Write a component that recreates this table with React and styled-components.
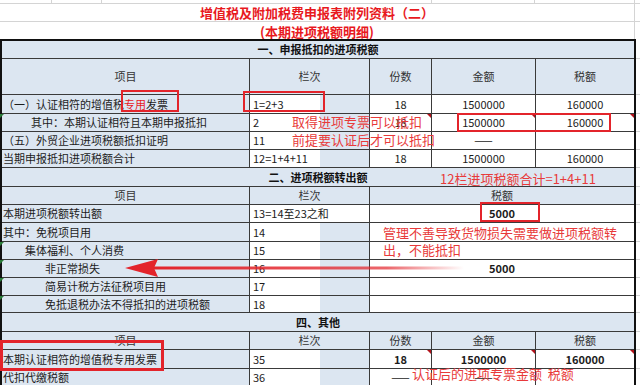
import styled, { createGlobalStyle } from "styled-components";

const GlobalStyle = createGlobalStyle`
  html, body { margin: 0; padding: 0; background: #fff; }
  body { font-family: "Noto Sans CJK SC", "Noto Sans", sans-serif; }
`;

const BLUE = "#dce6f1";
const LINE = "#3a3a3a";
const GRID = "#d4d4d4";
const ROW_H = [18, 36, 19, 18, 18, 18, 19, 18, 18, 19, 18, 18, 18, 17, 19, 18, 19, 18];

const Page = styled.div`
  position: relative;
  width: 640px;
  height: 385px;
  overflow: hidden;
  background: #fff;
`;

const TopStrip = styled.div`
  height: 4px;
  box-sizing: border-box;
  display: grid;
  grid-template-columns: 52px 50px 330px 103px 100px 5px;
  border-bottom: 1px solid ${GRID};
  & > div { border-right: 1px solid ${GRID}; }
  & > div:last-child { border-right: none; }
`;

const SheetRow = styled.div`
  height: ${(p) => p.$h}px;
  box-sizing: border-box;
  display: grid;
  grid-template-columns: 635px 5px;
  border-bottom: ${(p) => (p.$line ? `1px solid ${GRID}` : "none")};
`;

const TitleCell = styled.div`
  display: flex;
  align-items: center;
  justify-content: center;
  border-right: 1px solid ${GRID};
  color: #e8191e;
  font-weight: 700;
  font-size: 13px;
  line-height: 1;
  padding-top: ${(p) => p.$pt || 0}px;
`;

const Sheet = styled.div`
  display: flex;
  align-items: flex-start;
`;

const Table = styled.div`
  width: 636px;
  box-sizing: border-box;
  border: 2px solid #111;
  border-bottom: none;
`;

const Gutter = styled.div`
  flex: 1;
  display: flex;
  flex-direction: column;
`;

const GutterCell = styled.div`
  height: ${(p) => p.$h}px;
  box-sizing: border-box;
  border-bottom: 1px solid ${GRID};
`;

const Row = styled.div`
  height: ${(p) => p.$h}px;
  display: grid;
  grid-template-columns: 248px 120px 62px 104px 98px;
`;

const Cell = styled.div`
  grid-column: span ${(p) => p.$span || 1};
  position: relative;
  box-sizing: border-box;
  display: flex;
  align-items: center;
  justify-content: center;
  border-right: 1px solid ${LINE};
  border-bottom: 1px solid ${LINE};
  background: #fff;
  font-size: 11px;
  line-height: 1;
  color: #1c1c1c;
  white-space: nowrap;
  &:last-child { border-right: none; }
`;

const Section = styled(Cell)`
  background: ${BLUE};
  font-weight: 700;
  color: #111;
`;

const Head = styled(Cell)`
  background: ${BLUE};
  color: #333;
`;

const Item = styled(Cell)`
  justify-content: flex-start;
  padding-left: ${(p) => p.$indent || 1}px;
  background: ${BLUE};
  &::before {
    content: "";
    display: ${(p) => (p.$flag ? "block" : "none")};
    position: absolute;
    left: -2px;
    top: 0;
    border-top: 4px solid #2a7d3a;
    border-right: 4px solid transparent;
  }
`;

const Code = styled(Cell)`
  justify-content: flex-start;
  padding-left: 3px;
  background: ${(p) => (p.$plain ? "#fff" : `linear-gradient(to right, #fff 70px, ${BLUE} 70px)`)};
`;

const Num = styled(Cell)`
  font-weight: ${(p) => (p.$bold ? 700 : 400)};
  &::after {
    content: "";
    display: ${(p) => (p.$note ? "block" : "none")};
    position: absolute;
    right: 0;
    top: 0;
    border-top: 4px solid #b3121a;
    border-left: 4px solid transparent;
  }
`;

const RedText = styled.span`
  color: #e8191e;
`;

const Note = styled.div`
  position: absolute;
  left: ${(p) => p.$x}px;
  top: ${(p) => p.$y}px;
  width: ${(p) => (p.$w ? `${p.$w}px` : "auto")};
  color: #e83a3a;
  font-size: 13px;
  line-height: 17px;
  white-space: ${(p) => (p.$w ? "normal" : "nowrap")};
`;

const Box = styled.div`
  position: absolute;
  left: ${(p) => p.$x}px;
  top: ${(p) => p.$y}px;
  width: ${(p) => p.$w}px;
  height: ${(p) => p.$h}px;
  box-sizing: border-box;
  border: ${(p) => p.$b || 2}px solid #e3242b;
`;

const Arrow = styled.svg`
  position: absolute;
  left: 120px;
  top: 254px;
`;

export default function App() {
  return (
    <>
      <GlobalStyle />
      <Page>
        <TopStrip>
          <div /><div /><div /><div /><div /><div />
        </TopStrip>
        <SheetRow $h={18} $line>
          <TitleCell>增值税及附加税费申报表附列资料（二）</TitleCell>
          <div />
        </SheetRow>
        <SheetRow $h={17}>
          <TitleCell $pt={2}>(本期进项税额明细)</TitleCell>
          <div />
        </SheetRow>

        <Sheet>
          <Table>
            <Row $h={18}><Section $span={5}>一、申报抵扣的进项税额</Section></Row>
            <Row $h={36}>
              <Head>项目</Head><Head>栏次</Head><Head>份数</Head><Head>金额</Head><Head>税额</Head>
            </Row>
            <Row $h={19}>
              <Item>（一）认证相符的增值税<RedText>专用</RedText>发票</Item>
              <Code>1=2+3</Code>
              <Num>18</Num><Num>1500000</Num><Num>160000</Num>
            </Row>
            <Row $h={18}>
              <Item $indent={29} $flag>其中：本期认证相符且本期申报抵扣</Item>
              <Code>2</Code>
              <Num $note>18</Num><Num $note>1500000</Num><Num $note>160000</Num>
            </Row>
            <Row $h={18}>
              <Item>（五）外贸企业进项税额抵扣证明</Item>
              <Code>11</Code>
              <Num /><Num>——</Num><Num />
            </Row>
            <Row $h={18}>
              <Item>当期申报抵扣进项税额合计</Item>
              <Code>12=1+4+11</Code>
              <Num>18</Num><Num>1500000</Num><Num>160000</Num>
            </Row>

            <Row $h={19}><Section $span={5}>二、进项税额转出额</Section></Row>
            <Row $h={18}>
              <Head>项目</Head><Head>栏次</Head><Head $span={3}>税额</Head>
            </Row>
            <Row $h={18}>
              <Item>本期进项税额转出额</Item>
              <Code $plain>13=14至23之和</Code>
              <Num $span={3} $bold>5000</Num>
            </Row>
            <Row $h={19}>
              <Item>其中：免税项目用</Item>
              <Code>14</Code>
              <Num $span={3} />
            </Row>
            <Row $h={18}>
              <Item $indent={23} $flag>集体福利、个人消费</Item>
              <Code>15</Code>
              <Num $span={3} />
            </Row>
            <Row $h={18}>
              <Item $indent={43} $flag>非正常损失</Item>
              <Code>16</Code>
              <Num $span={3} $bold>5000</Num>
            </Row>
            <Row $h={18}>
              <Item $indent={43} $flag>简易计税方法征税项目用</Item>
              <Code>17</Code>
              <Num $span={3} />
            </Row>
            <Row $h={17}>
              <Item $indent={43} $flag>免抵退税办法不得抵扣的进项税额</Item>
              <Code>18</Code>
              <Num $span={3} />
            </Row>

            <Row $h={19}><Section $span={5}>四、其他</Section></Row>
            <Row $h={18}>
              <Head>项目</Head><Head>栏次</Head><Head>份数</Head><Head>金额</Head><Head>税额</Head>
            </Row>
            <Row $h={19}>
              <Item>本期认证相符的增值税专用发票</Item>
              <Code>35</Code>
              <Num $bold $note>18</Num><Num $bold $note>1500000</Num><Num $bold $note>160000</Num>
            </Row>
            <Row $h={18}>
              <Item>代扣代缴税额</Item>
              <Code>36</Code>
              <Num>——</Num><Num>——</Num><Num />
            </Row>
          </Table>
          <Gutter>
            {ROW_H.map((h, i) => (
              <GutterCell key={i} $h={i === 0 ? h + 2 : h} />
            ))}
          </Gutter>
        </Sheet>

        <Box $x={121} $y={90} $w={58} $h={22} />
        <Box $x={243} $y={91} $w={82} $h={21} />
        <Box $x={457} $y={113} $w={154} $h={19} />
        <Box $x={480} $y={202} $w={60} $h={20} />
        <Box $x={0} $y={340} $w={164} $h={31} $b={3} />

        <Note $x={292} $y={113}>取得进项专票可以抵扣</Note>
        <Note $x={292} $y={131}>前提要认证后才可以抵扣</Note>
        <Note $x={440} $y={170}>12栏进项税额合计=1+4+11</Note>
        <Note $x={383} $y={224} $w={245}>管理不善导致货物损失需要做进项税额转出，不能抵扣</Note>
        <Note $x={412} $y={365}>认证后的进项专票金额&nbsp;&nbsp;税额</Note>

        <Arrow width="350" height="26" viewBox="0 0 350 26">
          <defs>
            <linearGradient id="tail" x1="0" x2="1" y1="0" y2="0">
              <stop offset="0" stopColor="#e3242b" />
              <stop offset="0.75" stopColor="#e3242b" stopOpacity="0.7" />
              <stop offset="1" stopColor="#e3242b" stopOpacity="0" />
            </linearGradient>
          </defs>
          <rect x="34" y="12.5" width="310" height="3" fill="url(#tail)" />
          <path d="M5 14 L38 5 L34 14 L38 23 Z" fill="#e3242b" />
        </Arrow>
      </Page>
    </>
  );
}
